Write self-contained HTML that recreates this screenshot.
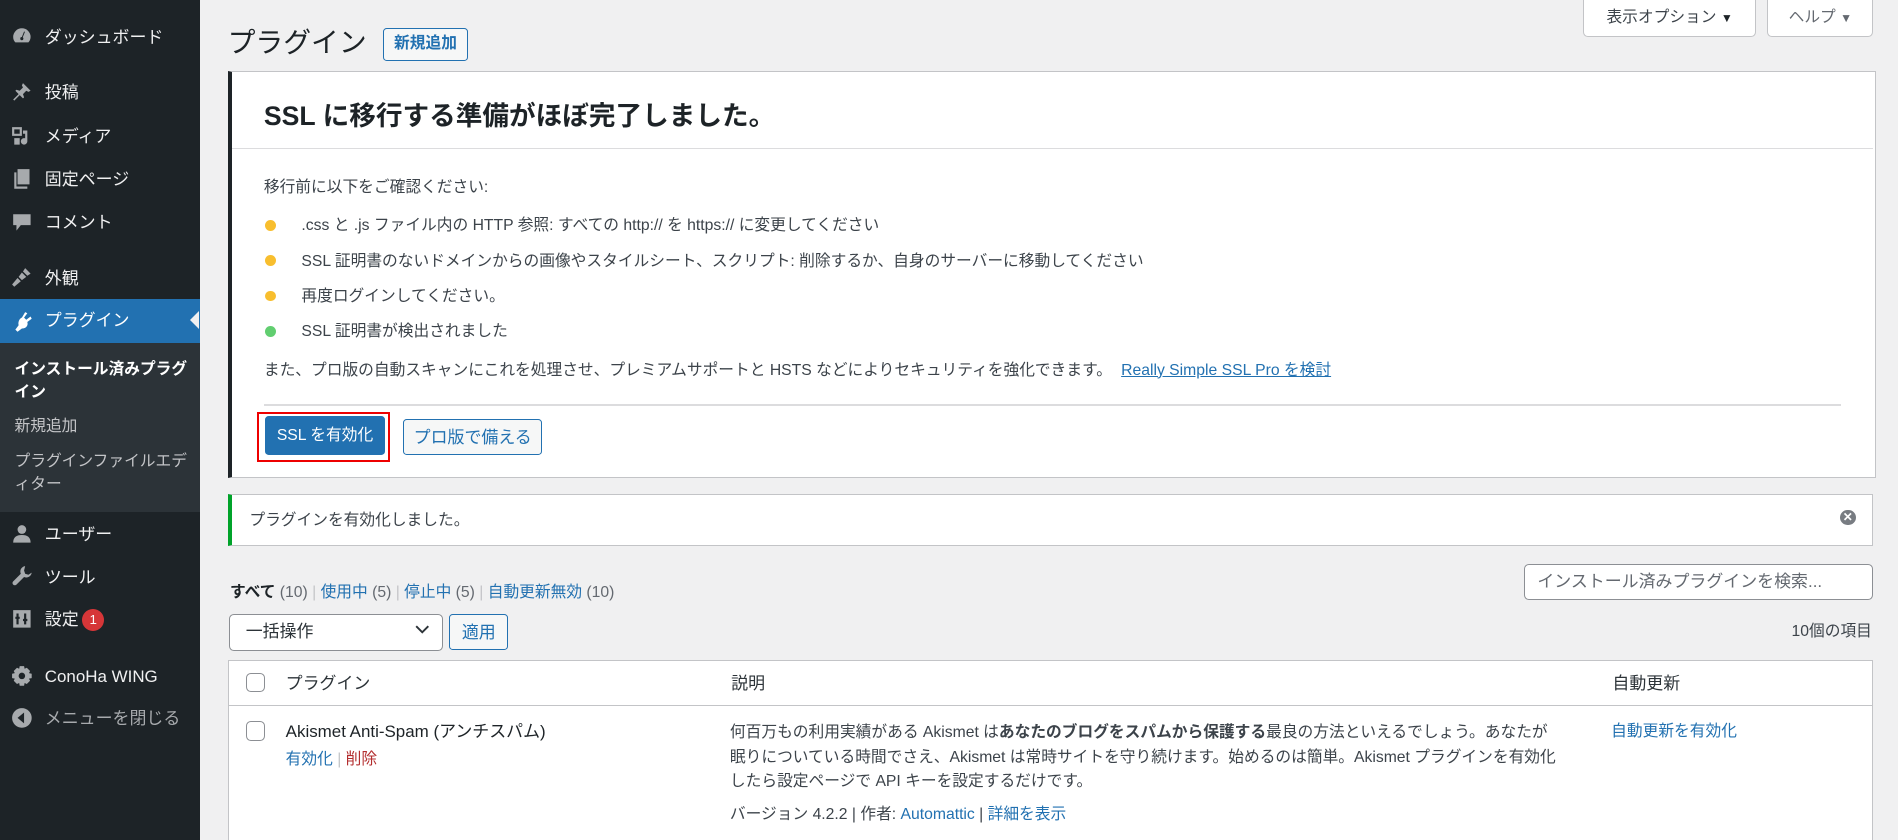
<!DOCTYPE html>
<html><head><meta charset="utf-8"><style>
html,body{margin:0;padding:0;background:#f0f0f1;overflow:hidden;width:1898px;height:840px}
#w{position:relative;width:1568px;height:694px;zoom:1.2105;font-family:"Liberation Sans","Noto Sans CJK JP",sans-serif;font-size:13px;color:#3c434a;background:#f0f0f1}
.a{position:absolute;white-space:nowrap;line-height:18px}
#sb{position:absolute;left:0;top:0;width:165px;height:694px;background:#1d2327}
.mi{position:absolute;left:37px;color:#f0f0f1;font-size:14px;line-height:18px;white-space:nowrap}
.ic{position:absolute;left:9px;width:18px;height:18px}
.ic svg{width:18px;height:18px;fill:#a7aaad}
.sub{position:absolute;left:12px;color:#c3c4c7;font-size:13px;line-height:19px}
a,.lk{color:#2271b1;text-decoration:none}
.box{position:absolute;background:#fff;border:1px solid #c3c4c7}
.dot{position:absolute;left:219px;width:9px;height:9px;border-radius:50%;background:#f8be2e}
.btn{position:absolute;border:1px solid #2271b1;border-radius:3px;color:#2271b1;background:#f6f7f7;text-align:center;box-sizing:border-box}
.cb{position:absolute;width:16px;height:16px;border:1px solid #8c8f94;border-radius:4px;background:#fff;box-sizing:border-box}
</style></head><body><div id="w">
<div id="sb">
 <div class="ic" style="top:21px"><svg viewBox="0 0 20 20"><path d="M10 3a8 8 0 0 0-8 8c0 2 .7 3.7 2 5h12a8 8 0 0 0 2-5 8 8 0 0 0-8-8zm0 11a1.5 1.5 0 1 1 0-3l2-5 .8.3-2 5a1.5 1.5 0 0 1-.8 2.7z"/></svg></div><div class="mi" style="top:22px">ダッシュボード</div>
 <div class="ic" style="top:67px"><svg viewBox="0 0 20 20"><path d="M11 2l7 7-2 1-2-1-3 3 1 3-1 1-3-3-5 5-1-1 5-5-3-3 1-1 3 1 3-3-1-2z"/></svg></div><div class="mi" style="top:68px">投稿</div>
 <div class="ic" style="top:103px"><svg viewBox="0 0 20 20"><path d="M1 2h9v8H1zM3 4v4h5V4zM11 5h4v10a3 3 0 1 1-2-2.8V8h-2zM3 12h5v6H3z"/></svg></div><div class="mi" style="top:104px">メディア</div>
 <div class="ic" style="top:139px"><svg viewBox="0 0 20 20"><path d="M6 1h11v14H6zM3 4h2v13h10v2H3z"/></svg></div><div class="mi" style="top:140px">固定ページ</div>
 <div class="ic" style="top:174px"><svg viewBox="0 0 20 20"><path d="M2 3h16v10H9l-4 5v-5H2z"/></svg></div><div class="mi" style="top:175px">コメント</div>
 <div class="ic" style="top:220px"><svg viewBox="0 0 20 20"><path d="M13 2l5 5-3 2-4-4zM10 6l4 4-4 3-3-3zM6 11l3 3-6 5-2-2z"/></svg></div><div class="mi" style="top:221px">外観</div>
 <div style="position:absolute;top:247px;left:0;width:165px;height:36px;background:#2271b1"></div>
 <div style="position:absolute;left:157px;top:257px;width:0;height:0;border-top:8px solid transparent;border-bottom:8px solid transparent;border-right:8px solid #f0f0f1"></div>
 <div class="ic" style="top:256px"><svg viewBox="0 0 20 20" style="fill:#fff"><path d="M13 2l2 1-3 4 2 2 4-3 1 2-4 3c1 3-1 6-5 6l-4 3-2-2 3-4C6 10 9 7 10 7z"/></svg></div><div class="mi" style="top:256px;color:#fff">プラグイン</div>
 <div style="position:absolute;top:283px;left:0;width:165px;height:140px;background:#2c3338"></div>
 <div class="sub" style="top:296px;color:#fff;font-weight:bold;line-height:19px;white-space:normal;width:145px">インストール済みプラグイン</div>
 <div class="sub" style="top:343px">新規追加</div>
 <div class="sub" style="top:372px;white-space:normal;width:145px">プラグインファイルエディター</div>
 <div class="ic" style="top:432px"><svg viewBox="0 0 20 20"><circle cx="10" cy="6" r="4"/><path d="M2 18c0-5 3-7 8-7s8 2 8 7z"/></svg></div><div class="mi" style="top:433px">ユーザー</div>
 <div class="ic" style="top:467px"><svg viewBox="0 0 20 20"><path d="M13 1a5 5 0 0 0-4 7l-7 7a2 2 0 0 0 3 3l7-7a5 5 0 0 0 7-4l-3 2-3-1-1-3z"/></svg></div><div class="mi" style="top:468px">ツール</div>
 <div class="ic" style="top:502px"><svg viewBox="0 0 20 20"><path d="M2 2h16v16H2zM5 5v3H4v2h1v5h2v-5h1V8H7V5zm7 0v5h-1v2h1v3h2v-3h1v-2h-1V5z"/></svg></div><div class="mi" style="top:503px">設定</div>
 <div style="position:absolute;left:68px;top:503px;width:18px;height:18px;border-radius:50%;background:#d63638;color:#fff;font-size:11px;line-height:18px;text-align:center">1</div>
 <div class="ic" style="top:549px"><svg viewBox="0 0 20 20"><path d="M8 1h4l.5 2.5 2-1 3 3-1 2L19 8v4l-2.5.5 1 2-3 3-2-1L12 19H8l-.5-2.5-2 1-3-3 1-2L1 12V8l2.5-.5-1-2 3-3 2 1zm2 6a3 3 0 1 0 0 6 3 3 0 0 0 0-6z"/></svg></div><div class="mi" style="top:550px">ConoHa WING</div>
 <div class="ic" style="top:584px"><svg viewBox="0 0 20 20"><circle cx="10" cy="10" r="9"/><path d="M12 5v10l-6-5z" fill="#1d2327"/></svg></div><div class="mi" style="top:585px;color:#a7aaad">メニューを閉じる</div>
</div>

<div class="a" style="left:188px;top:21px;font-size:23px;line-height:30px;color:#1d2327">プラグイン</div>
<div class="btn" style="left:316px;top:23px;width:71px;height:27px;line-height:25px;font-weight:bold;font-size:13px">新規追加</div>
<div class="box" style="left:1308px;top:-4px;width:141px;height:33px;border-radius:0 0 4px 4px;line-height:37px;text-align:center;font-size:13px">表示オプション <span style="font-size:10px;color:#1d2327">▼</span></div>
<div class="box" style="left:1460px;top:-4px;width:86px;height:33px;border-radius:0 0 4px 4px;line-height:37px;text-align:center;color:#646970">ヘルプ <span style="font-size:10px">▼</span></div>

<div class="box" style="left:188px;top:59px;width:1358px;height:334px;border-left:4px solid #1d2327"></div>
<div class="a" style="left:218px;top:83px;font-size:22px;line-height:28px;font-weight:bold;color:#1d2327">SSL に移行する準備がほぼ完了しました。</div>
<div style="position:absolute;left:192px;top:122px;width:1355px;height:1px;background:#dcdcde"></div>
<div class="a" style="left:218px;top:146px">移行前に以下をご確認ください:</div>
<div class="dot" style="top:182px"></div><div class="a" style="left:249px;top:178px">.css と .js ファイル内の HTTP 参照: すべての http:// を https:// に変更してください</div>
<div class="dot" style="top:211px"></div><div class="a" style="left:249px;top:207px">SSL 証明書のないドメインからの画像やスタイルシート、スクリプト: 削除するか、自身のサーバーに移動してください</div>
<div class="dot" style="top:240px"></div><div class="a" style="left:249px;top:236px">再度ログインしてください。</div>
<div class="dot" style="top:269px;background:#61ce70"></div><div class="a" style="left:249px;top:265px">SSL 証明書が検出されました</div>
<div class="a" style="left:218px;top:297px">また、プロ版の自動スキャンにこれを処理させ、プレミアムサポートと HSTS などによりセキュリティを強化できます。 <span class="lk" style="text-decoration:underline;margin-left:4px">Really Simple SSL Pro を検討</span></div>
<div style="position:absolute;left:218px;top:334px;width:1303px;height:1px;background:#dcdcde"></div>
<div style="position:absolute;left:212px;top:340px;width:107px;height:38px;border:2px solid #e00"></div>
<div class="btn" style="left:219px;top:344px;width:99px;height:32px;line-height:32px;background:#2271b1;color:#fff">SSL を有効化</div>
<div class="btn" style="left:333px;top:346px;width:115px;height:30px;line-height:29px;font-size:14px">プロ版で備える</div>

<div class="box" style="left:188px;top:408px;width:1355px;height:41px;border-left:4px solid #00a32a"></div>
<div class="a" style="left:206px;top:421px">プラグインを有効化しました。</div>
<div style="position:absolute;left:1520px;top:421px;width:13px;height:13px;border-radius:50%;background:#787c82;color:#fff;font-size:10px;line-height:13px;text-align:center;font-weight:bold">✕</div>

<div class="box" style="left:1259px;top:466px;width:287px;height:28px;border-color:#8c8f94;border-radius:4px"></div>
<div class="a" style="left:1270px;top:472px;font-size:14px;color:#646970">インストール済みプラグインを検索...</div>
<div class="a" style="left:190px;top:481px;color:#646970"><b style="color:#1d2327">すべて</b> (10) <span style="color:#c3c4c7">|</span> <span class="lk">使用中</span> (5) <span style="color:#c3c4c7">|</span> <span class="lk">停止中</span> (5) <span style="color:#c3c4c7">|</span> <span class="lk">自動更新無効</span> (10)</div>
<div class="box" style="left:189px;top:507px;width:175px;height:29px;border-color:#8c8f94;border-radius:4px"></div>
<div class="a" style="left:203px;top:513px;font-size:14px;color:#2c3338">一括操作</div>
<svg style="position:absolute;left:343px;top:516px" width="12" height="8" viewBox="0 0 12 8"><path d="M1 1l5 5 5-5" stroke="#2c3338" stroke-width="1.6" fill="none"/></svg>
<div class="btn" style="left:371px;top:507px;width:49px;height:30px;line-height:29px;font-size:14px">適用</div>
<div class="a" style="left:1480px;top:513px;color:#3c434a">10個の項目</div>

<div class="box" style="left:188px;top:545px;width:1358px;height:160px"></div>
<div style="position:absolute;left:189px;top:582px;width:1358px;height:1px;background:#c3c4c7"></div>
<div class="cb" style="left:203px;top:556px"></div>
<div class="a" style="left:236px;top:556px;font-size:14px;color:#2c3338">プラグイン</div>
<div class="a" style="left:604px;top:556px;font-size:14px;color:#2c3338">説明</div>
<div class="a" style="left:1332px;top:556px;font-size:14px;color:#2c3338">自動更新</div>
<div class="cb" style="left:203px;top:596px"></div>
<div class="a" style="left:236px;top:596px;font-size:14px;color:#1d2327">Akismet Anti-Spam (アンチスパム)</div>
<div class="a" style="left:236px;top:619px"><span class="lk">有効化</span> <span style="color:#c3c4c7">|</span> <span style="color:#b32d2e">削除</span></div>
<div class="a" style="left:603px;top:596px;line-height:20px;color:#3c434a">何百万もの利用実績がある Akismet は<b>あなたのブログをスパムから保護する</b>最良の方法といえるでしょう。あなたが<br>眠りについている時間でさえ、Akismet は常時サイトを守り続けます。始めるのは簡単。Akismet プラグインを有効化<br>したら設定ページで API キーを設定するだけです。</div>
<div class="a" style="left:603px;top:664px;color:#3c434a">バージョン 4.2.2 | 作者: <span class="lk">Automattic</span> | <span class="lk">詳細を表示</span></div>
<div class="a lk" style="left:1331px;top:596px">自動更新を有効化</div>
</div></body></html>
